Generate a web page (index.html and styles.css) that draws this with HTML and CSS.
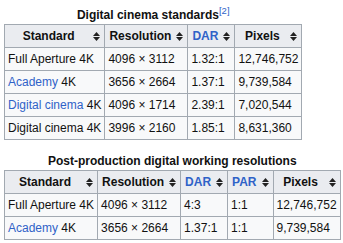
FILE: index.html
```html
<!DOCTYPE html>
<html>
<head>
<meta charset="utf-8">
<link rel="stylesheet" href="styles.css">
</head>
<body>
<div class="page">
  <table class="wikitable">
    <caption>Digital cinema standards<sup class="ref">[2]</sup></caption>
    <thead>
      <tr>
        <th><div class="h"><span class="t">Standard</span><svg class="sort" viewBox="0 0 7 9"><polygon points="0,4 3.5,0 7,4"/><polygon points="0,5 7,5 3.5,9"/></svg></div></th>
        <th><div class="h"><span class="t">Resolution</span><svg class="sort" viewBox="0 0 7 9"><polygon points="0,4 3.5,0 7,4"/><polygon points="0,5 7,5 3.5,9"/></svg></div></th>
        <th><div class="h"><span class="t link">DAR</span><svg class="sort" viewBox="0 0 7 9"><polygon points="0,4 3.5,0 7,4"/><polygon points="0,5 7,5 3.5,9"/></svg></div></th>
        <th><div class="h"><span class="t">Pixels</span><svg class="sort" viewBox="0 0 7 9"><polygon points="0,4 3.5,0 7,4"/><polygon points="0,5 7,5 3.5,9"/></svg></div></th>
      </tr>
    </thead>
    <tbody>
      <tr><td>Full Aperture 4K</td><td>4096 × 3112</td><td>1.32:1</td><td>12,746,752</td></tr>
      <tr><td><span class="link">Academy</span> 4K</td><td>3656 × 2664</td><td>1.37:1</td><td>9,739,584</td></tr>
      <tr><td><span class="link">Digital cinema</span> 4K</td><td>4096 × 1714</td><td>2.39:1</td><td>7,020,544</td></tr>
      <tr><td>Digital cinema 4K</td><td>3996 × 2160</td><td>1.85:1</td><td>8,631,360</td></tr>
    </tbody>
  </table>

  <table class="wikitable">
    <caption>Post-production digital working resolutions</caption>
    <thead>
      <tr>
        <th><div class="h"><span class="t">Standard</span><svg class="sort" viewBox="0 0 7 9"><polygon points="0,4 3.5,0 7,4"/><polygon points="0,5 7,5 3.5,9"/></svg></div></th>
        <th><div class="h"><span class="t">Resolution</span><svg class="sort" viewBox="0 0 7 9"><polygon points="0,4 3.5,0 7,4"/><polygon points="0,5 7,5 3.5,9"/></svg></div></th>
        <th><div class="h"><span class="t link">DAR</span><svg class="sort" viewBox="0 0 7 9"><polygon points="0,4 3.5,0 7,4"/><polygon points="0,5 7,5 3.5,9"/></svg></div></th>
        <th><div class="h"><span class="t link">PAR</span><svg class="sort" viewBox="0 0 7 9"><polygon points="0,4 3.5,0 7,4"/><polygon points="0,5 7,5 3.5,9"/></svg></div></th>
        <th><div class="h"><span class="t">Pixels</span><svg class="sort" viewBox="0 0 7 9"><polygon points="0,4 3.5,0 7,4"/><polygon points="0,5 7,5 3.5,9"/></svg></div></th>
      </tr>
    </thead>
    <tbody>
      <tr><td>Full Aperture 4K</td><td>4096 × 3112</td><td>4:3</td><td>1:1</td><td>12,746,752</td></tr>
      <tr><td><span class="link">Academy</span> 4K</td><td>3656 × 2664</td><td>1.37:1</td><td>1:1</td><td>9,739,584</td></tr>
    </tbody>
  </table>
</div>
</body>
</html>
```

FILE: styles.css
```css
html, body {
  margin: 0;
  padding: 0;
  background: #ffffff;
}
body {
  font-family: "Liberation Sans", Arial, sans-serif;
  font-size: 12px;
  color: #111111;
}
.page {
  display: flex;
  flex-direction: column;
  align-items: flex-start;
  gap: 12px;
  padding: 6px 4px 0 4px;
}
.wikitable {
  border-collapse: collapse;
  background: #f8f9fa;
  border: 1px solid #a2a9b1;
}
.wikitable caption {
  font-weight: bold;
  line-height: 18px;
  text-align: center;
  white-space: nowrap;
}
.ref {
  font-weight: normal;
  font-size: 9.5px;
  line-height: 0;
  color: #2f62c8;
  vertical-align: 5px;
}
.wikitable th,
.wikitable td {
  border: 1px solid #a2a9b1;
  line-height: 14px;
  padding: 4px 3px;
  white-space: nowrap;
  text-align: left;
}
.wikitable th {
  background: #eaecf0;
  font-weight: bold;
  padding: 4px 4px;
}
.h {
  display: flex;
  align-items: center;
}
.t {
  flex: 1;
  text-align: center;
}
.sort {
  width: 7px;
  height: 9px;
  margin-left: 5px;
  fill: #222222;
  flex: none;
}
.link {
  color: #2f62c8;
}
```
